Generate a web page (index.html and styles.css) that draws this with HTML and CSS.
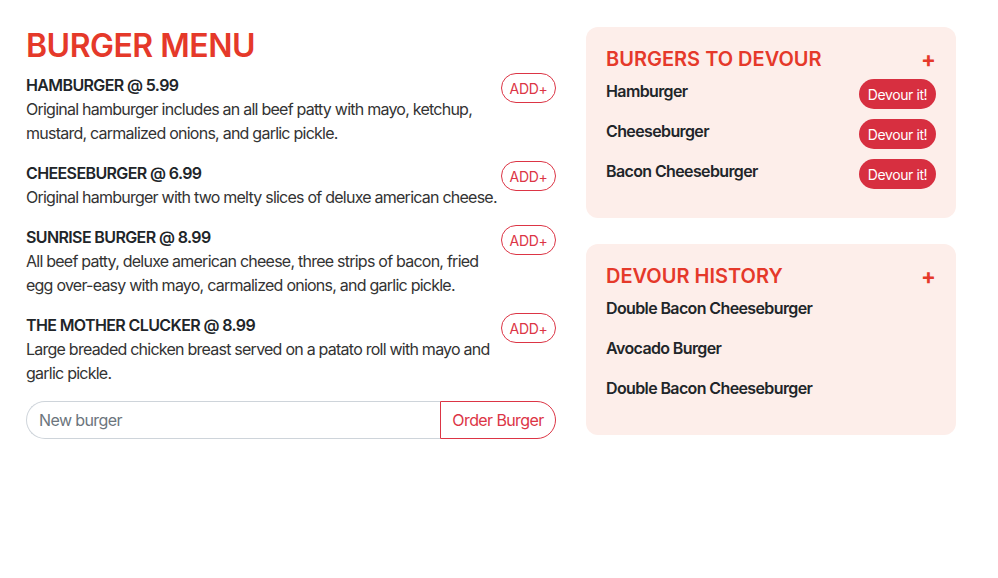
FILE: index.html
```html
<!DOCTYPE html>
<html>
<head>
<meta charset="utf-8">
<link rel="stylesheet" href="styles.css">
</head>
<body>
<div class="page">
  <section class="menu">
    <h1 class="menu-title">BURGER MENU</h1>
    <div class="item">
      <div class="item-text">
        <div class="item-name">HAMBURGER @ 5.99</div>
        <div class="item-desc">Original hamburger includes an all beef patty with mayo, ketchup, mustard, carmalized onions, and garlic pickle.</div>
      </div>
      <button class="add-btn">ADD+</button>
    </div>
    <div class="item">
      <div class="item-text">
        <div class="item-name">CHEESEBURGER @ 6.99</div>
        <div class="item-desc">Original hamburger with two melty slices of deluxe american cheese.</div>
      </div>
      <button class="add-btn">ADD+</button>
    </div>
    <div class="item">
      <div class="item-text">
        <div class="item-name">SUNRISE BURGER @ 8.99</div>
        <div class="item-desc">All beef patty, deluxe american cheese, three strips of bacon, fried egg over-easy with mayo, carmalized onions, and garlic pickle.</div>
      </div>
      <button class="add-btn">ADD+</button>
    </div>
    <div class="item">
      <div class="item-text">
        <div class="item-name">THE MOTHER CLUCKER @ 8.99</div>
        <div class="item-desc">Large breaded chicken breast served on a patato roll with mayo and garlic pickle.</div>
      </div>
      <button class="add-btn">ADD+</button>
    </div>
    <form class="order-form">
      <input class="order-input" type="text" placeholder="New burger">
      <button class="order-btn" type="button">Order Burger</button>
    </form>
  </section>
  <aside class="side">
    <div class="card">
      <div class="card-head">
        <h2 class="card-title">BURGERS TO DEVOUR</h2>
        <span class="card-plus">+</span>
      </div>
      <div class="row"><span class="row-name">Hamburger</span><button class="devour-btn">Devour it!</button></div>
      <div class="row"><span class="row-name">Cheeseburger</span><button class="devour-btn">Devour it!</button></div>
      <div class="row"><span class="row-name">Bacon Cheeseburger</span><button class="devour-btn">Devour it!</button></div>
    </div>
    <div class="card">
      <div class="card-head">
        <h2 class="card-title">DEVOUR HISTORY</h2>
        <span class="card-plus">+</span>
      </div>
      <div class="row"><span class="row-name">Double Bacon Cheeseburger</span></div>
      <div class="row"><span class="row-name">Avocado Burger</span></div>
      <div class="row"><span class="row-name">Double Bacon Cheeseburger</span></div>
    </div>
  </aside>
</div>
</body>
</html>
```
FILE: styles.css
```css
* { box-sizing: border-box; }
html, body { margin: 0; padding: 0; background: #fff; }
body {
  font-family: Inter, "Noto Sans", sans-serif;
  font-size: 16px;
  line-height: 24px;
  letter-spacing: -0.62px;
  color: #212529;
}
.page {
  display: grid;
  grid-template-columns: 530px 370px;
  column-gap: 30px;
  padding: 27px 0 0 26px;
  align-items: start;
}
.menu-title {
  margin: 0 0 8px;
  font-size: 32px;
  line-height: 38px;
  font-weight: 600;
  color: #e5392a;
  letter-spacing: -0.5px;
}
.item {
  display: flex;
  align-items: flex-start;
  margin-bottom: 16px;
}
.item-text { flex: 1; min-width: 0; }
.item-name { font-weight: 600; color: #212529; }
.item-desc { color: #333; letter-spacing: -0.76px; }
.add-btn {
  flex: none;
  width: 55px;
  height: 30px;
  padding: 0;
  border: 1px solid #dc3545;
  border-radius: 15px;
  background: #fff;
  color: #dc3545;
  font-family: inherit;
  font-size: 14px;
  letter-spacing: -0.3px;
}
.order-form {
  display: flex;
  height: 38px;
}
.order-input {
  flex: 1;
  min-width: 0;
  border: 1px solid #ced4da;
  border-right: none;
  border-radius: 19px 0 0 19px;
  padding: 0 12px;
  font-family: inherit;
  font-size: 16px;
  letter-spacing: -0.6px;
  color: #495057;
  outline: none;
}
.order-input::placeholder { color: #6c757d; }
.order-btn {
  flex: none;
  width: 116px;
  border: 1px solid #dc3545;
  border-radius: 0 19px 19px 0;
  background: #fff;
  color: #dc3545;
  font-family: inherit;
  font-size: 16px;
  letter-spacing: -0.6px;
  padding: 0;
}
.side { display: flex; flex-direction: column; gap: 26px; }
.card {
  background: #fdeeea;
  border-radius: 12px;
  padding: 20px 20px 19px;
}
.card-head {
  display: flex;
  justify-content: space-between;
  align-items: center;
  height: 24px;
  margin-bottom: 8px;
}
.card-title {
  margin: 0;
  font-size: 20px;
  line-height: 24px;
  font-weight: 600;
  letter-spacing: 0;
  color: #e5392a;
}
.card-plus {
  color: #e5392a;
  font-size: 22px;
  font-weight: 700;
  line-height: 24px;
  letter-spacing: 0;
}
.row {
  display: flex;
  justify-content: space-between;
  align-items: flex-start;
  min-height: 30px;
  margin-bottom: 10px;
}
.row-name { font-weight: 600; }
.devour-btn {
  flex: none;
  width: 77px;
  height: 30px;
  padding: 0;
  border: none;
  border-radius: 15px;
  background: #d72f40;
  color: #fff;
  font-family: inherit;
  font-size: 14px;
  letter-spacing: -0.4px;
}
```
